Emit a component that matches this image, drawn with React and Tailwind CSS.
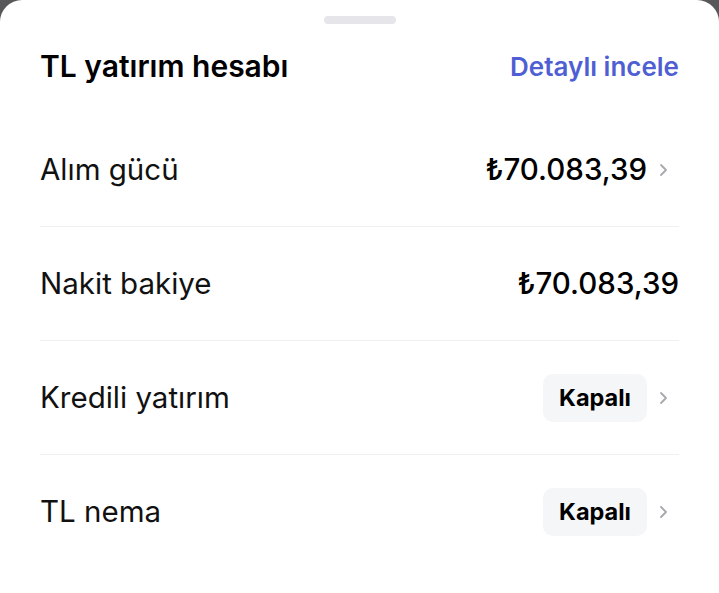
export default function App() {
  const rows = [
    { label: 'Alım gücü', value: '₺70.083,39', chevron: true },
    { label: 'Nakit bakiye', value: '₺70.083,39', chevron: false },
    { label: 'Kredili yatırım', badge: 'Kapalı', chevron: true },
    { label: 'TL nema', badge: 'Kapalı', chevron: true },
  ]

  return (
    <div className="w-[719px] h-[593px] bg-[#58585a]" style={{ fontFamily: 'Inter, "Noto Sans", sans-serif' }}>
      <div className="h-full bg-white rounded-t-[22px] px-10 flex flex-col">
        <div className="flex justify-center pt-4">
          <div className="w-[72px] h-2 rounded-full bg-[#e6e6ea]" />
        </div>
        <div className="flex items-center justify-between h-[89px] pb-1">
          <h1 className="text-[30px] font-semibold text-black">TL yatırım hesabı</h1>
          <button className="text-[26px] font-semibold text-[#4f5fd3]">Detaylı incele</button>
        </div>
        {rows.map((row, i) => (
          <div key={row.label} className={i > 0 ? 'border-t border-[#f0f0f2]' : ''}>
            <div className="h-[113px] flex items-center justify-between">
              <span className="text-[29.5px] text-[#111]">{row.label}</span>
              <div className="flex items-center">
                {row.value && (
                  <span className="text-[29.5px] font-medium text-black">{row.value}</span>
                )}
                {row.badge && (
                  <span className="h-12 w-[104px] flex items-center justify-center rounded-[10px] bg-[#f5f6f8] text-[23.5px] font-bold text-black">
                    {row.badge}
                  </span>
                )}
                {row.chevron && (
                  <svg width="33" height="16" viewBox="0 0 33 16" className="-mr-px">
                    <polyline points="14,3 19,8 14,13" fill="none" stroke="#a8a8ad" strokeWidth="1.8" strokeLinecap="round" strokeLinejoin="round" />
                  </svg>
                )}
              </div>
            </div>
          </div>
        ))}
      </div>
    </div>
  )
}
